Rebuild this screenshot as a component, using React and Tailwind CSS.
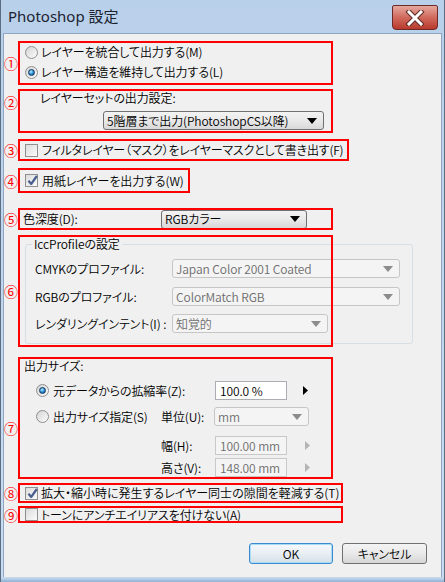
import React from "react";

const Radio = ({ checked }) => (
  <span className="flex h-[13px] w-[13px] shrink-0 items-center justify-center rounded-full border border-[#8e8f8f] bg-linear-to-br from-[#d4d4d4] to-[#fcfcfc]">
    {checked && (
      <span className="h-[7px] w-[7px] rounded-full border border-[#123a63] bg-[radial-gradient(circle_at_40%_35%,#bdefff,#2a8fd6_50%,#0c4a80)]" />
    )}
  </span>
);

const Check = ({ checked }) => (
  <span className="relative flex h-[13px] w-[13px] shrink-0 items-center justify-center border border-[#8f8f8f] bg-linear-to-br from-[#dcdcdc] to-[#fbfbfb]">
    {checked && (
      <svg width="13" height="13" viewBox="0 0 13 13" className="absolute -top-[1px] left-0">
        <path d="M2.5 6.8 L5.2 10 L10.8 2" fill="none" stroke="#4a5f8f" strokeWidth="2.2" strokeLinejoin="round" />
      </svg>
    )}
  </span>
);

const Down = ({ gray }) => (
  <svg width="10" height="6" viewBox="0 0 10 6" className="shrink-0">
    <polygon points="0,0 10,0 5,6" fill={gray ? "#8c8c8c" : "#000000"} />
  </svg>
);

const Right = ({ gray }) => (
  <svg width="5" height="9" viewBox="0 0 5 9" className="shrink-0">
    <polygon points="0,0 5,4.5 0,9" fill={gray ? "#b4b4b4" : "#000000"} />
  </svg>
);

const Select = ({ value, width, disabled }) => (
  <div
    className={`flex h-[19px] shrink-0 items-center justify-between gap-[2px] rounded-[3px] border pl-[3px] pr-[6px] ${
      disabled
        ? "border-[#c6c6c6] bg-[#f4f4f4] text-[#6d6d6d]"
        : "border-[#707070] bg-linear-to-b from-[#f3f3f3] via-[#e9e9e9] to-[#d8d8d8] text-black"
    } ${width}`}
  >
    <span className="whitespace-nowrap">{value}</span>
    <Down gray={disabled} />
  </div>
);

const Field = ({ value, disabled }) => (
  <div
    className={`flex h-[19px] w-[72px] shrink-0 items-center whitespace-nowrap border pl-[4px] ${
      disabled ? "border-[#c8c8c8] bg-[#f4f4f4] text-[#6d6d6d]" : "border-[#abadb3] bg-white text-black"
    }`}
  >
    {value}
  </div>
);

const Frame = ({ className, children }) => (
  <div className={`relative shrink-0 ${className}`}>
    {children}
    <span className="pointer-events-none absolute inset-0 border-2 border-[#ff0000]" />
  </div>
);

const Num = ({ children, className = "" }) => (
  <span className={`w-[14px] shrink-0 text-center text-[14px] font-normal leading-[14px] tracking-normal text-[#ff0000] ${className}`}>
    {children}
  </span>
);

export default function App() {
  return (
    <div className="flex h-[582px] w-[445px] flex-col whitespace-nowrap border-x border-[#5b6d82] bg-linear-to-b from-[#b9d0ea] to-[#c9dcf1] font-['Noto_Sans_CJK_JP',sans-serif] text-[12px] font-[350] leading-[14px] tracking-[-0.1px] text-black [font-feature-settings:'palt']">
      {/* title bar */}
      <div className="flex h-[33px] shrink-0 items-start">
        <span className="ml-[7px] mt-[6px] font-['Noto_Sans','Noto_Sans_CJK_JP',sans-serif] text-[15px] font-normal leading-[20px] tracking-normal text-[#1b2330]">
          Photoshop 設定
        </span>
        <div className="ml-auto mr-[6px] mt-[5px] flex h-[25px] w-[46px] items-center justify-center rounded-b-[4px] rounded-t-[2px] border border-[#6e2a26] bg-linear-to-b from-[#e5a89e] via-[#d0695c] to-[#b8382c]">
          <svg width="20" height="16" viewBox="0 0 20 16">
            <path d="M4 2 L16 14 M16 2 L4 14" stroke="#5a2a25" strokeWidth="5" strokeLinecap="square" />
            <path d="M4 2 L16 14 M16 2 L4 14" stroke="#ffffff" strokeWidth="3" strokeLinecap="square" />
          </svg>
        </div>
      </div>

      {/* content */}
      <div className="mx-[2px] flex flex-1 flex-col border-x border-t border-[#8ea6c2] bg-[#f0f0f0]">
        {/* 1 */}
        <div className="mt-[7px] flex items-center">
          <Num>①</Num>
          <Frame className="h-[44px] w-[315px]">
            <div className="flex flex-col pl-[7px] pt-[1px]">
              <div className="flex h-[20px] items-center gap-[3px]">
                <Radio />
                <span>レイヤーを統合して出力する(M)</span>
              </div>
              <div className="flex h-[20px] items-center gap-[3px]">
                <Radio checked />
                <span>レイヤー構造を維持して出力する(L)</span>
              </div>
            </div>
          </Frame>
        </div>

        {/* 2 */}
        <div className="mt-[4px] flex items-start">
          <Num className="mt-[6px]">②</Num>
          <Frame className="h-[44px] w-[315px]">
            <div className="flex flex-col pt-[2px]">
              <span className="ml-[22px] h-[14px]">レイヤーセットの出力設定:</span>
              <div className="ml-[85px] mt-[6px]">
                <Select value="5階層まで出力(PhotoshopCS以降)" width="w-[221px]" />
              </div>
            </div>
          </Frame>
        </div>

        {/* 3 */}
        <div className="mt-[6px] flex items-center">
          <Num>③</Num>
          <Frame className="flex h-[22px] w-[331px] items-center gap-[4px] pl-[7px]">
            <Check />
            <span className="tracking-[-0.2px]">フィルタレイヤー（マスク）をレイヤーマスクとして書き出す(F)</span>
          </Frame>
        </div>

        {/* 4 */}
        <div className="mt-[7px] flex items-center">
          <Num>④</Num>
          <Frame className="flex h-[25px] w-[172px] items-center gap-[4px] pl-[7px]">
            <Check checked />
            <span>用紙レイヤーを出力する(W)</span>
          </Frame>
        </div>

        {/* 5 */}
        <div className="mt-[15px] flex items-center">
          <Num>⑤</Num>
          <Frame className="flex h-[22px] w-[315px] items-center pl-[5px]">
            <span className="w-[138px] shrink-0">色深度(D):</span>
            <Select value="RGBカラー" width="w-[146px]" />
          </Frame>
        </div>

        {/* 6 */}
        <div className="mt-[5px] flex items-center">
          <Num>⑥</Num>
          <Frame className="h-[112px] w-[315px]">
            <fieldset className="ml-[7px] mt-[2px] w-[388px] rounded-[3px] border border-[#d5dfe5] p-0">
              <legend className="ml-[6px] px-[2px] leading-[14px]">IccProfileの設定</legend>
              <div className="flex flex-col pb-[10px] pl-[9px] pt-[8px]">
                <div className="flex items-center">
                  <span className="w-[137px] shrink-0">CMYKのプロファイル:</span>
                  <Select value="Japan Color 2001 Coated" width="w-[228px]" disabled />
                </div>
                <div className="mt-[9px] flex items-center">
                  <span className="w-[137px] shrink-0">RGBのプロファイル:</span>
                  <Select value="ColorMatch RGB" width="w-[228px]" disabled />
                </div>
                <div className="mt-[8px] flex items-center">
                  <span className="w-[137px] shrink-0">レンダリングインテント(I) :</span>
                  <Select value="知覚的" width="w-[156px]" disabled />
                </div>
              </div>
            </fieldset>
          </Frame>
        </div>

        {/* 7 */}
        <div className="mt-[10px] flex items-start">
          <Num className="mt-[64px]">⑦</Num>
          <Frame className="h-[122px] w-[315px] overflow-hidden">
            <div className="flex flex-col pt-[2px]">
              <span className="ml-[6px] h-[14px]">出力サイズ:</span>
              <div className="ml-[18px] mt-[8px] flex h-[19px] items-center">
                <Radio checked />
                <span className="ml-[4px] w-[162px] shrink-0">元データからの拡縮率(Z):</span>
                <Field value="100.0 %" />
                <span className="ml-[16px]">
                  <Right />
                </span>
              </div>
              <div className="ml-[18px] mt-[7px] flex h-[19px] items-center">
                <Radio />
                <span className="ml-[4px] w-[108px] shrink-0">出力サイズ指定(S)</span>
                <span className="w-[53px] shrink-0">単位(U):</span>
                <Select value="mm" width="w-[95px]" disabled />
              </div>
              <div className="ml-[143px] mt-[10px] flex h-[19px] items-center">
                <span className="w-[54px] shrink-0">幅(H):</span>
                <Field value="100.00 mm" disabled />
                <span className="ml-[18px]">
                  <Right gray />
                </span>
              </div>
              <div className="ml-[143px] mt-[3px] flex h-[19px] items-center">
                <span className="w-[54px] shrink-0">高さ(V):</span>
                <Field value="148.00 mm" disabled />
                <span className="ml-[18px]">
                  <Right gray />
                </span>
              </div>
            </div>
          </Frame>
        </div>

        {/* 8 */}
        <div className="mt-[4px] flex items-center">
          <Num>⑧</Num>
          <Frame className="flex h-[20px] w-[325px] items-center gap-[3px] pl-[7px]">
            <Check checked />
            <span className="tracking-normal">拡大・縮小時に発生するレイヤー同士の隙間を軽減する(T)</span>
          </Frame>
        </div>

        {/* 9 */}
        <div className="mt-[3px] flex items-center">
          <Num>⑨</Num>
          <Frame className="flex h-[17px] w-[325px] items-center gap-[3px] pl-[7px]">
            <Check />
            <span>トーンにアンチエイリアスを付けない(A)</span>
          </Frame>
        </div>

        {/* buttons */}
        <div className="mt-[20px] flex justify-end gap-[9px] pr-[14px]">
          <button className="flex h-[21px] w-[84px] items-center justify-center rounded-[3px] border border-[#3c8ad0] bg-linear-to-b from-[#f4f9fc] via-[#e8eef3] to-[#d6e0e8] shadow-[inset_0_0_0_1px_#a8dcf5]">
            OK
          </button>
          <button className="flex h-[21px] w-[85px] items-center justify-center rounded-[3px] border border-[#707070] bg-linear-to-b from-[#f4f4f4] via-[#e9e9e9] to-[#d6d6d6]">
            キャンセル
          </button>
        </div>
      </div>
      <div className="h-[5px] shrink-0 border-t border-[#c8d8ea] bg-linear-to-b from-[#c3d7ee] to-[#8fb0d2]" />
    </div>
  );
}
